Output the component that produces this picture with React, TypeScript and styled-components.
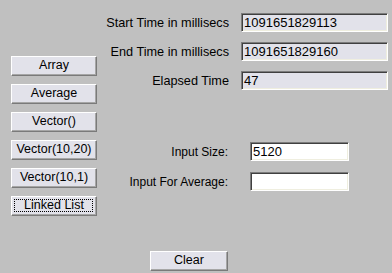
import React from "react";
import styled, { createGlobalStyle } from "styled-components";

const Global = createGlobalStyle`
  html, body { margin: 0; padding: 0; background: #c0c0c0; }
  body { font-family: "Liberation Sans", Arial, sans-serif; font-size: 13px; color: #000; }
`;

const Frame = styled.div`
  width: 392px;
  height: 273px;
  background: #c0c0c0;
  display: flex;
  overflow: hidden;
`;

const LeftColumn = styled.div`
  width: 97px;
  box-sizing: border-box;
  padding: 56px 0 0 11px;
  display: flex;
  flex-direction: column;
  gap: 8px;
`;

const Button = styled.div<{ $w?: number; $focused?: boolean }>`
  position: relative;
  box-sizing: border-box;
  width: ${(p) => p.$w ?? 86}px;
  height: 20px;
  background: #e2e2ea;
  border: 1px solid;
  border-color: #ffffff #7a7a7a #7a7a7a #ffffff;
  box-shadow: inset -1px -1px 0 #a6a6a6;
  display: flex;
  align-items: center;
  justify-content: center;
  font-size: 12.5px;
  line-height: 1;
  padding-bottom: 1px;
  white-space: nowrap;
  ${(p) =>
    p.$focused &&
    `
    &::after {
      content: "";
      position: absolute;
      left: 2px; top: 2px; right: 3px; bottom: 3px;
      border: 1px dotted #000;
    }
  `}
`;

const RightColumn = styled.div`
  flex: 1;
  display: flex;
  flex-direction: column;
`;

const FormGrid = styled.div<{ $label: number; $gap: number; $field: number; $rowGap: number; $top: number }>`
  display: grid;
  grid-template-columns: ${(p) => p.$label}px ${(p) => p.$field}px;
  column-gap: ${(p) => p.$gap}px;
  row-gap: ${(p) => p.$rowGap}px;
  margin-top: ${(p) => p.$top}px;
  grid-auto-rows: 19px;
  align-items: center;
`;

const Label = styled.div<{ $size: number }>`
  text-align: right;
  white-space: nowrap;
  font-size: ${(p) => p.$size}px;
`;

const Field = styled.div<{ $editable?: boolean }>`
  box-sizing: border-box;
  height: 19px;
  background: ${(p) => (p.$editable ? "#ffffff" : "#e2e2ea")};
  border: 1px solid;
  border-color: #7c7c7c #ffffff #ffffff #7c7c7c;
  box-shadow: inset 1px 1px 0 #404040, inset -1px -1px 0 #efeedf;
  padding: 0 2px;
  display: flex;
  align-items: center;
  font-size: 13px;
  white-space: nowrap;
`;

const ClearRow = styled.div`
  margin-top: 60px;
  padding-left: 53px;
`;

const buttons = ["Array", "Average", "Vector()", "Vector(10,20)", "Vector(10,1)", "Linked List"];

export default function App() {
  return (
    <>
      <Global />
      <Frame>
        <LeftColumn>
          {buttons.map((b) => (
            <Button key={b} $focused={b === "Linked List"}>
              {b}
            </Button>
          ))}
        </LeftColumn>
        <RightColumn>
          <FormGrid $label={132} $gap={12} $field={147} $rowGap={10} $top={13}>
            <Label $size={12.7}>Start Time in millisecs</Label>
            <Field>1091651829113</Field>
            <Label $size={12.7}>End Time in millisecs</Label>
            <Field>1091651829160</Field>
            <Label $size={12.7}>Elapsed Time</Label>
            <Field>47</Field>
          </FormGrid>
          <FormGrid $label={131} $gap={22} $field={99} $rowGap={11} $top={52}>
            <Label $size={12}>Input Size:</Label>
            <Field $editable>5120</Field>
            <Label $size={12}>Input For Average:</Label>
            <Field $editable></Field>
          </FormGrid>
          <ClearRow>
            <Button $w={78}>Clear</Button>
          </ClearRow>
        </RightColumn>
      </Frame>
    </>
  );
}
